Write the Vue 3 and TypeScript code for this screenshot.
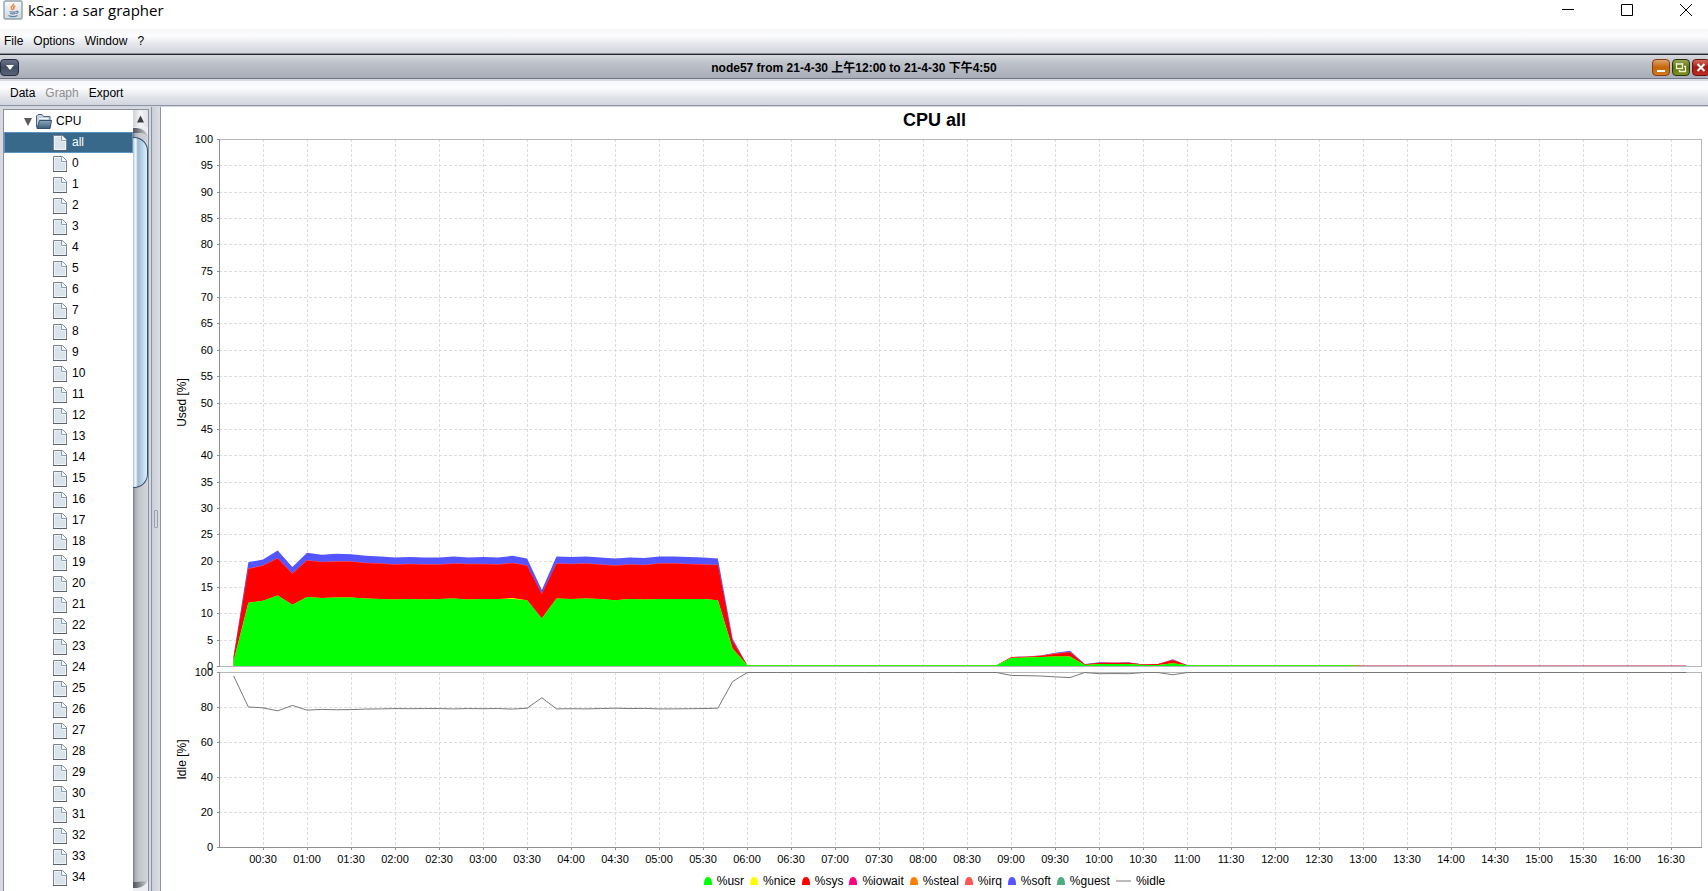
<script setup lang="ts">
import { computed, onBeforeUnmount, onMounted, ref } from 'vue'

interface Sample { t: number; usr: number; sys: number; total: number }

const cpuNodes: string[] = ['all', ...Array.from({ length: 36 }, (_, i) => String(i))]
const selected = ref('all')

const host = ref<HTMLElement | null>(null)
const width = ref(1547)
const height = ref(784)
let observer: ResizeObserver | undefined

function measure() {
  if (!host.value) return
  width.value = host.value.clientWidth
  height.value = host.value.clientHeight
}
onMounted(() => {
  measure()
  observer = new ResizeObserver(measure)
  if (host.value) observer.observe(host.value)
})
onBeforeUnmount(() => observer?.disconnect())

/* Cumulative heights: usr, usr + sys, and everything used. */
const busy: [number, number, number][] = [
  [1, 1.6, 2], [12, 18.4, 19.7], [12.4, 19, 20.2], [13.4, 20.4, 21.9], [11.6, 17.5, 18.8],
  [13.1, 20, 21.5], [12.9, 19.7, 21.1], [13, 19.8, 21.3], [13, 19.8, 21.2], [12.8, 19.5, 20.9],
  [12.7, 19.4, 20.8], [12.6, 19.2, 20.6], [12.7, 19.3, 20.7], [12.6, 19.2, 20.6], [12.7, 19.2, 20.6],
  [12.8, 19.4, 20.8], [12.6, 19.3, 20.6], [12.7, 19.3, 20.7], [12.7, 19.2, 20.6], [12.7, 19.5, 20.9],
  [12.5, 19, 20.4], [9, 13.6, 14.4], [12.8, 19.4, 20.8], [12.7, 19.3, 20.7], [12.8, 19.4, 20.8],
  [12.7, 19.2, 20.6], [12.5, 19, 20.4], [12.7, 19.2, 20.6], [12.6, 19.1, 20.5], [12.7, 19.4, 20.8],
  [12.7, 19.4, 20.8], [12.7, 19.3, 20.7], [12.7, 19.2, 20.6], [12.5, 19.1, 20.4], [3.3, 4.7, 5.2],
]
const later: Record<number, [number, number, number]> = {
  540: [1.5, 1.6, 1.7], 550: [1.6, 1.7, 1.8], 560: [1.7, 1.9, 2], 570: [1.8, 2.3, 2.5],
  580: [1.8, 2.6, 2.9], 590: [0.2, 0.3, 0.4], 600: [0.4, 0.6, 0.7], 610: [0.4, 0.6, 0.6],
  620: [0.4, 0.6, 0.7], 630: [0.2, 0.3, 0.3], 640: [0.2, 0.4, 0.4], 650: [0.5, 1.1, 1.3],
}
const samples: Sample[] = Array.from({ length: 100 }, (_, i) => {
  const t = (i + 1) * 10
  const [usr, sys, total] = busy[i] ?? later[t] ?? (t < 780 ? [0.15, 0.15, 0.15] : [0, 0.03, 0.03])
  return { t, usr, sys, total }
})

const left = 58
const right = computed(() => width.value - 7)
const top = 32
const gap = 6
const bottom = computed(() => height.value - 44)
const usedBottom = computed(() => top + Math.round((bottom.value - top - gap) * 0.751))
const idleTop = computed(() => usedBottom.value + gap)
const usedMiddle = computed(() => (top + usedBottom.value) / 2)
const idleMiddle = computed(() => (idleTop.value + bottom.value) / 2)

const x = (t: number) => left + ((right.value - left) * t) / 1010
const usedY = (v: number) => usedBottom.value - ((usedBottom.value - top) * v) / 100
const idleY = (v: number) => bottom.value - ((bottom.value - idleTop.value) * v) / 100

const hours = computed(() =>
  Array.from({ length: 33 }, (_, i) => {
    const t = (i + 1) * 30
    const label = `${String(Math.floor(t / 60)).padStart(2, '0')}:${String(t % 60).padStart(2, '0')}`
    return { label, x: Math.floor(x(t)) }
  }),
)
const usedTicks = computed(() => Array.from({ length: 21 }, (_, i) => ({ v: i * 5, y: Math.round(usedY(i * 5)) })))
const idleTicks = computed(() => Array.from({ length: 6 }, (_, i) => ({ v: i * 20, y: Math.round(idleY(i * 20)) })))

function area(pick: (s: Sample) => number): string {
  const line = samples.map((s) => `${x(s.t).toFixed(2)},${usedY(pick(s)).toFixed(2)}`).join(' ')
  return `${x(10).toFixed(2)},${usedBottom.value} ${line} ${x(1000).toFixed(2)},${usedBottom.value}`
}
const areas = computed(() => [
  { color: '#5555ff', points: area((s) => s.total) },
  { color: '#ff5555', points: area((s) => (s.total > 1 ? s.sys + 0.1 : s.sys)) },
  { color: '#ff0000', points: area((s) => s.sys) },
  { color: '#ffff00', points: area((s) => s.usr + (s.t === 200 ? 0.2 : 0)) },
  { color: '#00ff00', points: area((s) => s.usr) },
])
const idleLine = computed(() =>
  samples.map((s) => `${x(s.t).toFixed(2)},${(idleY(100 - (s.total > 0.5 ? s.total : 0)) + 0.5).toFixed(2)}`).join(' '),
)

const legend = [
  { name: '%usr', color: '#00ff00' }, { name: '%nice', color: '#ffff00' }, { name: '%sys', color: '#ff0000' },
  { name: '%iowait', color: '#ff0080' }, { name: '%steal', color: '#ff8000' }, { name: '%irq', color: '#ff5555' },
  { name: '%soft', color: '#5555ff' }, { name: '%guest', color: '#4caf7d' },
]
</script>

<template>
  <div class="window">
    <header class="os-bar">
      <svg class="java" viewBox="0 0 20 20" aria-hidden="true">
        <defs>
          <linearGradient id="javaFace" x1="0" y1="0" x2="0" y2="1">
            <stop offset="0" stop-color="#fafafa" /><stop offset="1" stop-color="#cfd8df" />
          </linearGradient>
        </defs>
        <rect x="1" y="1" width="18" height="18" rx="1.500" fill="url(#javaFace)" stroke="#8da1af" stroke-width="1.400" />
        <path d="M10.500 3.500c1 1.800-2.500 2.500-2.300 4.200 0 1 1 1.600 1.600 2.300M12.300 6c-2 .8-2.200 2-1 3.500" fill="none" stroke="#ee8132" stroke-width="1.400" />
        <path d="M6.500 11.500c2 .8 5 .8 7 0M7 13.300c2 .7 4 .7 5.500 0M5.500 15.500c2.500 1.300 6.500 1.300 9 0M13.500 11.200c2.500 0 1.800 1.800-.3 2.400" fill="none" stroke="#5f87a4" stroke-width="1.200" />
      </svg>
      <h1>kSar : a sar grapher</h1>
      <div class="os-buttons">
        <button type="button" aria-label="Minimize"><svg viewBox="0 0 12 12"><path d="M0 5.500h12" /></svg></button>
        <button type="button" aria-label="Maximize"><svg viewBox="0 0 12 12"><path d="M.5.5h11v11H.5z" /></svg></button>
        <button type="button" aria-label="Close"><svg viewBox="0 0 12 12"><path d="M0 0l12 12M12 0L0 12" /></svg></button>
      </div>
    </header>

    <nav class="menu main-menu">
      <button type="button">File</button>
      <button type="button">Options</button>
      <button type="button">Window</button>
      <button type="button">?</button>
    </nav>

    <div class="frame-bar">
      <button type="button" class="frame-menu" aria-label="Frame menu">
        <svg viewBox="0 0 8 5"><path d="M0 0h8L4 5z" fill="#fff" /></svg>
      </button>
      <h2>node57 from 21-4-30 上午12:00 to 21-4-30 下午4:50</h2>
      <div class="frame-buttons">
        <button type="button" class="orange" aria-label="Minimize frame">
          <svg viewBox="0 0 18 17"><path d="M5 12h8" stroke="#fff" stroke-width="2" /></svg>
        </button>
        <button type="button" class="green" aria-label="Restore frame">
          <svg viewBox="0 0 18 17" fill="none" stroke="#eef3d8">
            <path d="M4 5h7M4.500 4v5.500h6V4" stroke-width="1.300" /><path d="M12 7.500h1.500v5h-6V11" stroke-width="1.300" />
          </svg>
        </button>
        <button type="button" class="red" aria-label="Close frame">
          <svg viewBox="0 0 18 17"><path d="M5.500 5l7 7M12.500 5l-7 7" stroke="#fff" stroke-width="2" /></svg>
        </button>
      </div>
    </div>

    <nav class="menu frame-nav">
      <button type="button">Data</button>
      <button type="button" disabled>Graph</button>
      <button type="button">Export</button>
    </nav>

    <main class="split">
      <aside class="tree-pane">
        <div class="tree">
          <button type="button" class="node root">
            <svg class="arrow" viewBox="0 0 8 8"><path d="M0 0h8L4 8z" fill="#595959" /></svg>
            <svg class="folder" viewBox="0 0 16 15">
              <defs>
                <linearGradient id="folderFace" x1="0" y1="0" x2="0" y2="1">
                  <stop offset="0" stop-color="#8fa9bd" /><stop offset="1" stop-color="#3c5d79" />
                </linearGradient>
              </defs>
              <path d="M.5 13.500V2L2 .5h4L7.500 2.500H14V6" fill="#c3d0dc" stroke="#4b6580" />
              <path d="M3 4.500h9" stroke="#f4f8fb" />
              <path d="M3.500 6.500H15.500L14 14.500H1z" fill="url(#folderFace)" stroke="#33506a" />
            </svg>
            <span>CPU</span>
          </button>
          <button
            v-for="name in cpuNodes"
            :key="name"
            type="button"
            class="node leaf"
            :class="{ selected: name === selected }"
            @click="selected = name"
          >
            <svg class="file" viewBox="0 0 14 16">
              <path d="M.5.5h9l4 4v11H.5z" fill="#eef3f7" stroke="#7d8288" />
              <path d="M2 2h6v5h4v7H2z" fill="#d8e3ec" />
              <path d="M8.500 1v4.500H13" fill="none" stroke="#8ba3b8" />
              <path d="M9.500 1v3.500H13z" fill="#fff" />
              <path d="M0 15.500h14" stroke="#5c6167" />
            </svg>
            <span>{{ name }}</span>
          </button>
        </div>
        <div class="scrollbar">
          <button type="button" class="scroll-up" aria-label="Scroll up">
            <svg viewBox="0 0 8 8"><path d="M4 0l4 8H0z" fill="#3b3f45" /></svg>
          </button>
          <div class="track">
            <svg class="track-end" viewBox="0 0 15 10" preserveAspectRatio="none">
              <defs>
                <linearGradient id="shade" x1="0" y1="0" x2="1" y2="0">
                  <stop offset="0" stop-color="#55585e" /><stop offset="1" stop-color="#55585e" stop-opacity="0" />
                </linearGradient>
              </defs>
              <path d="M0 1h4c5 0 8 3 11 7v2C11 5 8 6 0 6z" fill="url(#shade)" />
              <path d="M0 0h15v8C12 4 9 1 4 1H0z" fill="#eceef1" />
            </svg>
            <div class="thumb" />
            <div class="rest" />
            <svg class="track-end" viewBox="0 0 15 10" preserveAspectRatio="none">
              <path d="M0 1c8 0 11-1 15-1C12 4 9 7 4 7H0z" fill="url(#shade)" />
              <path d="M0 7h4c5 0 8-3 11-7v10H0z" fill="#eceef1" />
            </svg>
          </div>
        </div>
      </aside>
      <div class="divider"><span class="grip" /></div>

      <section ref="host" class="chart">
        <svg class="plot" :width="width" :height="height" role="img" aria-label="CPU all">
          <text class="title" :x="width / 2" y="19" text-anchor="middle">CPU all</text>
          <g class="grid">
            <line v-for="h in hours" :key="'u' + h.label" :x1="h.x + 0.5" :x2="h.x + 0.5" :y1="top" :y2="usedBottom" />
            <line v-for="h in hours" :key="'i' + h.label" :x1="h.x + 0.5" :x2="h.x + 0.5" :y1="idleTop" :y2="bottom" />
            <line v-for="k in usedTicks" :key="'uy' + k.v" :x1="left" :x2="right" :y1="k.y + 0.5" :y2="k.y + 0.5" />
            <line v-for="k in idleTicks" :key="'iy' + k.v" :x1="left" :x2="right" :y1="k.y + 0.5" :y2="k.y + 0.5" />
          </g>
          <polygon v-for="a in areas" :key="a.color" :points="a.points" :fill="a.color" />
          <g class="outline">
            <rect :x="left + 0.5" :y="top + 0.5" :width="right - left" :height="usedBottom - top" />
            <rect :x="left + 0.5" :y="idleTop + 0.5" :width="right - left" :height="bottom - idleTop" />
          </g>
          <polyline :points="idleLine" fill="none" stroke="#787878" />
          <g class="axis">
            <path :d="`M${left + 0.5} ${top}V${usedBottom + 1}M${left + 0.5} ${idleTop}V${bottom + 1}M${left} ${bottom + 0.5}H${right + 1}`" />
            <path v-for="k in usedTicks" :key="k.v" :d="`M${left - 2} ${k.y + 0.5}h2`" />
            <path v-for="k in idleTicks" :key="'i' + k.v" :d="`M${left - 2} ${k.y + 0.5}h2`" />
            <path v-for="h in hours" :key="h.label" :d="`M${h.x + 0.5} ${bottom + 1}v2`" />
          </g>
          <g class="tick" text-anchor="end">
            <text v-for="k in usedTicks" :key="k.v" :x="left - 6" :y="k.y + 4">{{ k.v }}</text>
            <text v-for="k in idleTicks" :key="'i' + k.v" :x="left - 6" :y="k.y + 4">{{ k.v }}</text>
          </g>
          <g class="tick" text-anchor="middle">
            <text v-for="h in hours" :key="h.label" :x="h.x" :y="bottom + 16">{{ h.label }}</text>
          </g>
          <text class="name" text-anchor="middle" :transform="`translate(25 ${usedMiddle}) rotate(-90)`">Used [%]</text>
          <text class="name" text-anchor="middle" :transform="`translate(25 ${idleMiddle}) rotate(-90)`">Idle [%]</text>
        </svg>
        <ul class="legend">
          <li v-for="item in legend" :key="item.name">
            <svg class="swatch" viewBox="0 0 8 8"><path d="M0 8C0 3 1 0 4 0s4 3 4 8z" :fill="item.color" /></svg>{{ item.name }}
          </li>
          <li><svg class="dash" viewBox="0 0 15 2"><path d="M0 1h15" stroke="#bbb" stroke-width="2" /></svg>%idle</li>
        </ul>
      </section>
    </main>
  </div>
</template>

<style>
body { margin: 0; background: #fff; }
</style>

<style scoped>
.window {
  display: flex;
  flex-direction: column;
  height: 100vh;
  overflow: hidden;
  background: #d6d9df;
  color: #000;
  font-family: "Liberation Sans", "Noto Sans CJK SC", sans-serif;
  font-size: 12px;
}
button { padding: 0; border: 0; background: none; color: inherit; font: inherit; }
svg { display: block; }
h1, h2, ul { margin: 0; padding: 0; font-weight: normal; }

.os-bar { display: flex; flex: none; align-items: flex-start; height: 29px; background: #fff; }
.java { width: 20px; height: 20px; margin: 0 5px 0 3px; }
h1 { flex: 1; font: 15px/21px "Open Sans", sans-serif; }
.os-buttons { display: flex; gap: 47px; padding: 4px 16px 0 0; }
.os-buttons svg { width: 12px; height: 12px; fill: none; stroke: #000; }

.menu { display: flex; flex: none; align-items: center; background: linear-gradient(#f7f8fa, #fcfcfd 30%, #e6e8ec 60%, #d2d5de); }
.main-menu { gap: 10px; height: 24px; padding-left: 4px; border-bottom: 1px solid #8c909d; }
.frame-nav { gap: 10px; height: 24px; padding-left: 10px; border-bottom: 1px solid #8f95a4; }
.menu button { line-height: 16px; }
.menu button:disabled { color: #8e8f91; }

.frame-bar {
  display: grid; flex: none; grid-template-columns: 1fr auto 1fr; align-items: center; height: 23px; margin-bottom: 2px;
  border-top: 1px solid #23262e; border-bottom: 1px solid #717684;
  background: linear-gradient(#d8dadf, #c0c4cc 30%, #a7acb7);
}
.frame-bar h2 { padding-top: 2px; font-size: 12px; font-weight: bold; line-height: 20px; }
.frame-menu, .frame-buttons button { box-sizing: border-box; width: 18px; height: 17px; border-radius: 4px; }
.frame-menu { display: grid; place-items: center; width: 19px; border: 1px solid #262d3b; background: linear-gradient(#68728a, #424c61 50%, #59637a); }
.frame-menu svg { width: 8px; height: 5px; }
.frame-menu, .frame-buttons { margin-top: 2px; }
.frame-buttons { display: flex; gap: 2px; justify-content: flex-end; margin-right: -2px; }
.frame-buttons svg { width: 18px; height: 17px; margin: -1px; }
.orange { border: 1px solid #8b3a18; background: linear-gradient(#dba36a, #c56508 50%, #d17a1e); }
.green { border: 1px solid #29340a; background: linear-gradient(#97a555, #617308 50%, #7e921e); }
.red { border: 1px solid #6b0f0f; background: linear-gradient(#d06a5c, #a41a10 50%, #be2c22); }

.split { display: flex; flex: 1; min-height: 0; border-top: 1px solid #d0d4de; }
.tree-pane { display: flex; flex: none; width: 144px; margin: 2px 2px 0 3px; border: 1px solid #8b909e; border-bottom: 0; }
.tree { flex: 1; overflow: hidden; padding-top: 1px; background: #fff; }
.node { display: flex; align-items: center; box-sizing: border-box; width: 100%; height: 21px; border: 1px solid transparent; line-height: 19px; text-align: left; }
.root { padding-left: 19px; }
.arrow { width: 8px; height: 8px; margin-right: 4px; }
.folder { width: 16px; height: 15px; margin-right: 4px; }
.leaf { padding-left: 48px; }
.file { width: 14px; height: 16px; margin-right: 5px; }
.selected { border-color: #5d94c4; background: #39698a; color: #fff; }

.scrollbar { display: flex; flex: none; flex-direction: column; width: 15px; background: #d6d9df; }
.scroll-up { display: grid; flex: none; place-items: center; height: 17px; background: linear-gradient(90deg, #d0d3d9, #f3f4f6 50%, #dfe1e6); }
.scroll-up svg { width: 7px; height: 8px; }
.track { display: flex; flex: 1; flex-direction: column; overflow: hidden; background: linear-gradient(90deg, #777b82, #aeb1b8 16%, #c3c6cd 40%, #d2d5dc); }
.thumb {
  box-sizing: border-box; flex: 0 0 46%; border: 1px solid #344f6e; border-left: 0; border-radius: 0 14px 14px 0;
  background: linear-gradient(90deg, #a8bdd0, #f4f8fb 16%, #dce8f2 24%, #9cb8ce 34%, #b4cfe2 60%, #dcf2fc);
}
.rest { flex: 1; }
.track-end { flex: none; width: 15px; height: 10px; }
.divider { display: grid; flex: none; place-items: center; width: 8px; padding-top: 40px; border: solid #8b94a6; border-width: 0 1px; background: linear-gradient(90deg, #cbced6, #dcdee4); }
.grip { width: 2px; height: 16px; border: 1px solid #9da1ad; border-radius: 1px; }

.chart { display: flex; flex: 1; flex-direction: column; justify-content: flex-end; position: relative; min-width: 0; overflow: hidden; background: #fff; }
.plot { position: absolute; inset: 0; }
.title { font-size: 18px; font-weight: bold; }
.grid line { stroke: #dcdcdc; stroke-dasharray: 3 2; }
.outline rect { fill: none; stroke: #b8b8b8; }
.axis path { fill: none; stroke: #909090; }
.tick { font-size: 11px; }
.name { font-size: 12px; }
.legend { display: flex; justify-content: center; gap: 6px; padding-bottom: 2px; list-style: none; line-height: 16px; }
.legend li { display: flex; align-items: center; }
.swatch { width: 8px; height: 8px; margin-right: 5px; }
.dash { width: 15px; height: 2px; margin-right: 5px; }
</style>
